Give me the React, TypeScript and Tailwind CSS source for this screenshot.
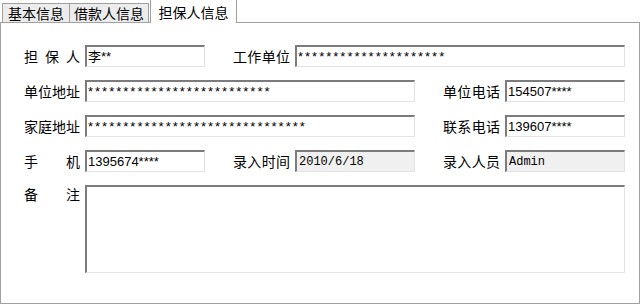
import React from "react";

const cjk = "font-['Noto_Sans_CJK_SC',sans-serif]";

const Label: React.FC<{ chars: string[]; w?: string; className?: string }> = ({ chars, w = "w-[56px]", className = "" }) => (
  <div className={`${w} ${className} flex h-[22px] shrink-0 items-center justify-between text-[14px] leading-none text-black ${cjk}`}>
    {chars.map((c, i) => (
      <span key={i}>{c}</span>
    ))}
  </div>
);

const Field: React.FC<{ value?: string; w: string; gray?: boolean; mono?: boolean; stars?: boolean }> = ({ value, w, gray, mono, stars }) => (
  <div
    className={`${w} ml-[5px] flex h-[22px] shrink-0 items-center overflow-hidden border-t-2 border-l-2 border-r border-b border-t-[#7c7c7c] border-l-[#7c7c7c] border-r-[#e3e3e3] border-b-[#e3e3e3] pl-[1px] text-black ${
      gray ? "bg-[#f0f0f0]" : "bg-white"
    }`}
  >
    {mono ? (
      <span className="pl-[1px] font-['Liberation_Mono',monospace] text-[12px] leading-none">{value}</span>
    ) : stars ? (
      <span className="font-['Liberation_Sans',sans-serif] text-[13px] leading-none tracking-[2px]">{value}</span>
    ) : (
      <span className="whitespace-pre text-[13px] leading-none font-['Liberation_Sans','Noto_Sans_CJK_SC',sans-serif]">{value}</span>
    )}
  </div>
);

function Tab({ title, active, w }: { title: string; active?: boolean; w: string }) {
  return (
    <div
      className={`${w} flex items-center justify-center border border-b-0 border-[#a0a0a0] text-[14px] leading-none text-black ${cjk} ${
        active ? "relative z-10 mb-[-1px] h-[24px] bg-white" : "h-[19px] bg-[#ececec]"
      }`}
    >
      {title}
    </div>
  );
}

export default function App() {
  return (
    <div className="h-[305px] w-[642px] bg-white">
      <div className="flex h-[22px] items-end pl-[2px]">
        <Tab title="基本信息" w="w-[68px]" />
        <Tab title="借款人信息" w="w-[80px] -ml-px" />
        <Tab title="担保人信息" w="w-[87px] ml-[1px]" active />
      </div>
      <div className="flex h-[282px] w-[640px] flex-col gap-[13px] border border-[#a0a0a0] bg-white pt-[22px] pl-[23px]">
        <div className="flex items-center">
          <Label chars={["担", "保", "人"]} />
          <Field value="李**" w="w-[120px]" />
          <Label chars={["工", "作", "单", "位"]} w="w-[57px]" className="ml-[28px]" />
          <Field value={"*".repeat(21)} stars w="w-[330px]" />
        </div>
        <div className="flex items-center">
          <Label chars={["单", "位", "地", "址"]} />
          <Field value={"*".repeat(26)} stars w="w-[330px]" />
          <Label chars={["单", "位", "电", "话"]} w="w-[57px]" className="ml-[28px]" />
          <Field value="154507****" w="w-[120px]" />
        </div>
        <div className="flex items-center">
          <Label chars={["家", "庭", "地", "址"]} />
          <Field value={"*".repeat(31)} stars w="w-[330px]" />
          <Label chars={["联", "系", "电", "话"]} w="w-[57px]" className="ml-[28px]" />
          <Field value="139607****" w="w-[120px]" />
        </div>
        <div className="flex items-center">
          <Label chars={["手", "机"]} />
          <Field value="1395674****" w="w-[120px]" />
          <Label chars={["录", "入", "时", "间"]} w="w-[57px]" className="ml-[28px]" />
          <Field value="2010/6/18" gray mono w="w-[120px]" />
          <Label chars={["录", "入", "人", "员"]} w="w-[57px]" className="ml-[28px]" />
          <Field value="Admin" gray mono w="w-[120px]" />
        </div>
        <div className="flex items-start">
          <div className={`flex w-[56px] shrink-0 justify-between pt-[2px] text-[14px] leading-none text-black ${cjk}`}>
            <span>备</span>
            <span>注</span>
          </div>
          <div className="ml-[5px] h-[88px] w-[540px] shrink-0 border-t-2 border-l-2 border-r border-b border-t-[#7c7c7c] border-l-[#7c7c7c] border-r-[#e3e3e3] border-b-[#e3e3e3] bg-white" />
        </div>
      </div>
    </div>
  );
}
